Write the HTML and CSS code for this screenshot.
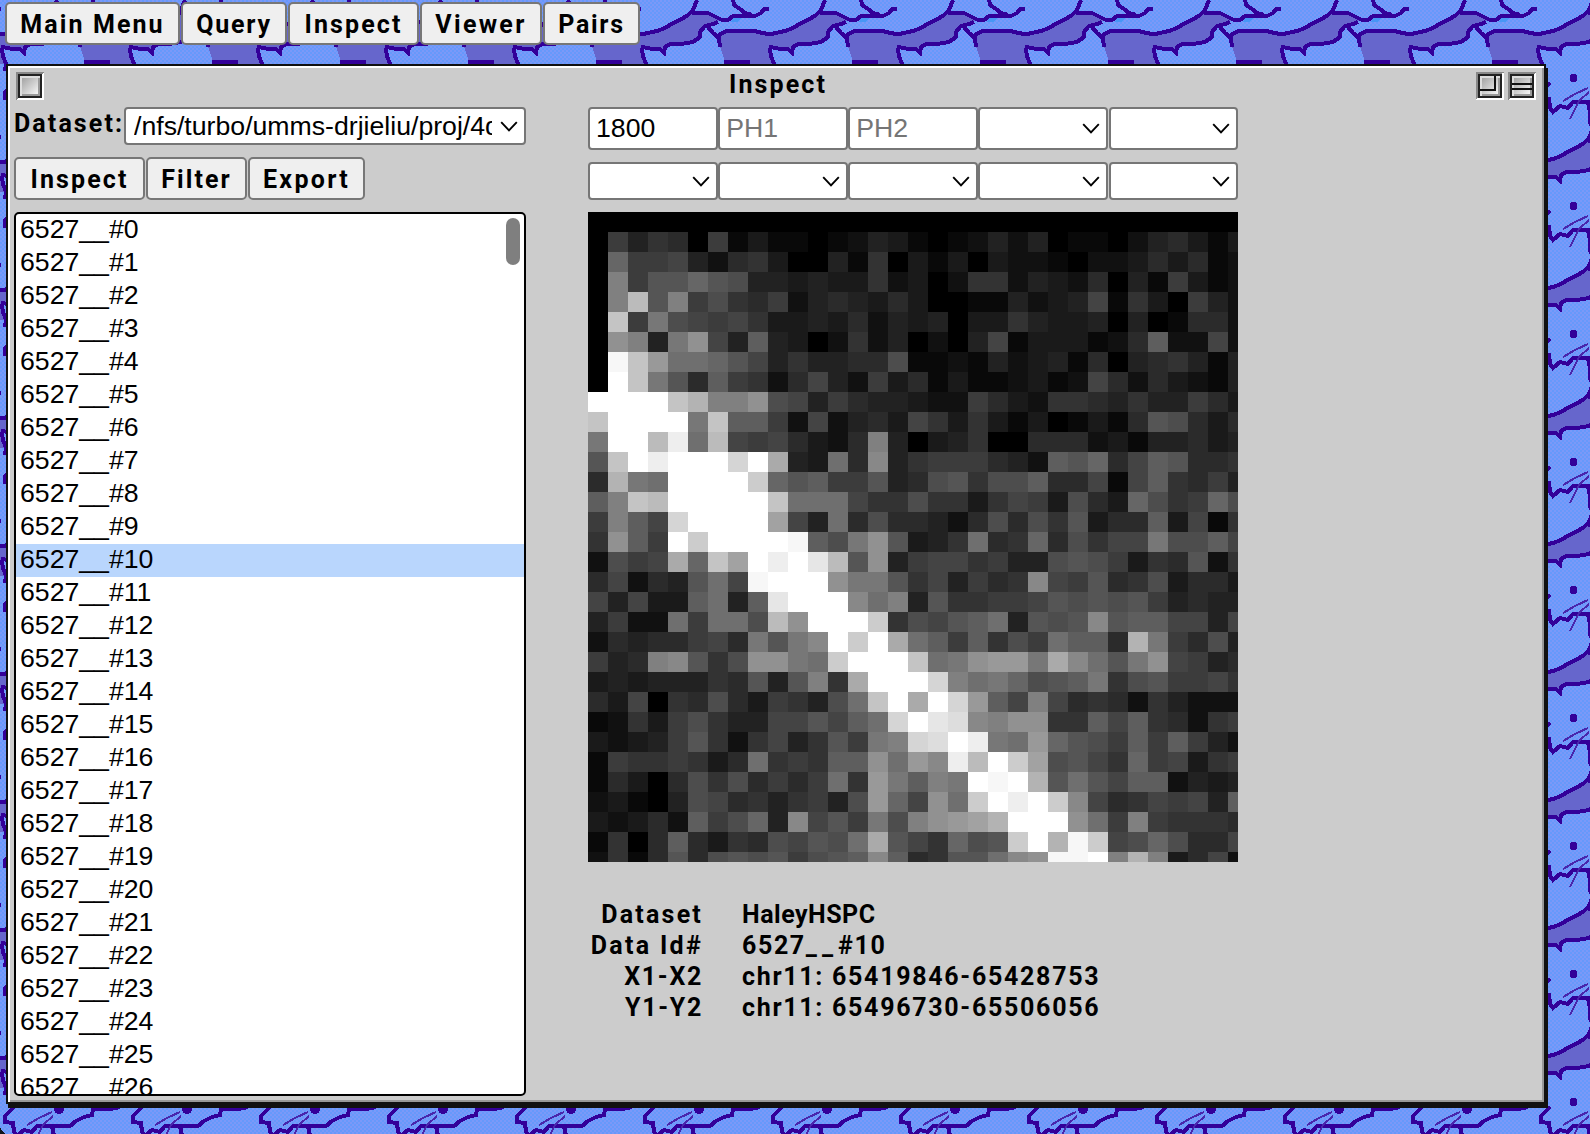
FILE: index.html
```html
<!DOCTYPE html>
<html lang="en">
<head>
<meta charset="utf-8">
<title>Inspect</title>
<link rel="stylesheet" href="styles.css">
</head>
<body>
<svg class="wallpaper" width="1590" height="1134" shape-rendering="crispEdges" aria-hidden="true">
  <defs>
    <pattern id="dither" width="4" height="4" patternUnits="userSpaceOnUse">
      <rect width="4" height="4" fill="#6699fb"/>
      <path d="M0 0h2v2H0zM2 2h2v2H2z" fill="#7b99f8"/>
    </pattern>
    <pattern id="tile" width="128" height="128" patternUnits="userSpaceOnUse">
      <rect width="128" height="128" fill="url(#dither)"/>
      <path d="M0 34L17 31L33 23L45 17L52 12L68 13L82 20L75 23L65 26L60 33L61 38L53 42L30 44L24 51L19 49L2 46L7 64L0 64Z" fill="#6666cc"/>
      <path d="M78 36L87 31L115 30L123 33L128 34V64H86L80 47Z" fill="#6666cc"/>
      <path d="M93 18h8l-4 4h-6z" fill="#4796f5"/>
      <g fill="none" stroke="#330099" stroke-width="4">
        <path d="M-5 34H3L17 31L25 28L33 23L40 20L48 15L53 10L57 0"/>
        <path d="M52 13H68L76 17L82 20H88L93 16H115L121 13L124 9H129"/>
        <path d="M-3 9H1"/>
        <path d="M93 -1L94 5L100 9L105 13L112 15"/>
        <path d="M78 22L73 24L65 26L60 32L60 37L53 42L41 44H30L25 47L24 53L20 49H12L3 47L2 50L3 56L6 64L5 71"/>
        <path d="M68 27L73 33L79 38L80 47M78 36L82 33L87 31H115L122 33L129 34"/>
        <path d="M84 62H110"/>
        <path d="M14 83L5 92V98L13 99L14 108L17 112L24 106L32 108L37 102H70L76 97L84 93L92 91L93 85H110L120 83"/>
        <path d="M52 102L54 112V122L57 129"/>
      </g>
      <path d="M27 101L39 94L52 88M53 92L43 101L34 119" fill="none" stroke="#4926ac" stroke-width="2"/>
      <circle cx="37.5" cy="78" r="4" fill="#330099"/>
      <circle cx="59" cy="85" r="5" fill="#330099"/>
    </pattern>
  </defs>
  <path d="M0 0H1590V1134H6Q0 1131 0 1124Z" fill="url(#tile)"/>
</svg>

<svg class="symbols" aria-hidden="true">
  <symbol id="chevron" viewBox="0 0 18 11"><path d="M1.2 1.2L9 9.4L16.8 1.2" fill="none" stroke="#000" stroke-width="1.9"/></symbol>
</svg>

<nav class="menu">
  <button class="btn menu-main">Main Menu</button>
  <button class="btn menu-query">Query</button>
  <button class="btn menu-inspect">Inspect</button>
  <button class="btn menu-viewer">Viewer</button>
  <button class="btn menu-pairs">Pairs</button>
</nav>

<main class="window">
  <header class="titlebar">
    <span class="box"><i class="face"></i></span>
    <h1 class="title">Inspect</h1>
    <span class="box"><i class="face"></i><svg class="glyph" width="20" height="20"><path d="M15 0V14H0" fill="none" stroke="#111" stroke-width="2"/></svg></span>
    <span class="box"><i class="face"></i><svg class="glyph" width="20" height="20"><path d="M0 8H20M0 13H20" stroke="#111" stroke-width="2"/></svg></span>
  </header>

  <div class="content">
    <section class="side">
      <div class="dataset">
        <label class="dataset-label">Dataset:</label>
        <div class="select dataset-select"><span class="select-text">/nfs/turbo/umms-drjieliu/proj/4dn</span><svg class="chev"><use href="#chevron"/></svg></div>
      </div>
      <div class="actions">
        <button class="btn act-inspect">Inspect</button>
        <button class="btn act-filter">Filter</button>
        <button class="btn act-export">Export</button>
      </div>
      <div class="listbox">
        <ul class="items">
          <li>6527__#0</li><li>6527__#1</li><li>6527__#2</li><li>6527__#3</li><li>6527__#4</li>
          <li>6527__#5</li><li>6527__#6</li><li>6527__#7</li><li>6527__#8</li><li>6527__#9</li>
          <li class="selected">6527__#10</li><li>6527__#11</li><li>6527__#12</li><li>6527__#13</li><li>6527__#14</li>
          <li>6527__#15</li><li>6527__#16</li><li>6527__#17</li><li>6527__#18</li><li>6527__#19</li>
          <li>6527__#20</li><li>6527__#21</li><li>6527__#22</li><li>6527__#23</li><li>6527__#24</li>
          <li>6527__#25</li><li>6527__#26</li>
        </ul>
        <span class="thumb"></span>
      </div>
    </section>

    <section class="view">
      <div class="row row-tall">
        <input class="field" type="text" value="1800">
        <input class="field" type="text" placeholder="PH1">
        <input class="field" type="text" placeholder="PH2">
        <div class="select"><svg class="chev"><use href="#chevron"/></svg></div>
        <div class="select"><svg class="chev"><use href="#chevron"/></svg></div>
      </div>
      <div class="row row-short">
        <div class="select"><svg class="chev"><use href="#chevron"/></svg></div>
        <div class="select"><svg class="chev"><use href="#chevron"/></svg></div>
        <div class="select"><svg class="chev"><use href="#chevron"/></svg></div>
        <div class="select"><svg class="chev"><use href="#chevron"/></svg></div>
        <div class="select"><svg class="chev"><use href="#chevron"/></svg></div>
      </div>
      <canvas class="heatmap" id="heatmap" width="650" height="650"></canvas>
      <dl class="info">
        <dt class="k1">Dataset</dt><dd class="v1">HaleyHSPC</dd>
        <dt class="k2">Data Id#</dt><dd class="v2">6527<span class="wide">__</span>#10</dd>
        <dt class="k3">X1-X2</dt><dd class="v3">chr11: 65419846-65428753</dd>
        <dt class="k3">Y1-Y2</dt><dd class="v3">chr11: 65496730-65506056</dd>
      </dl>
    </section>
  </div>
</main>
<script src="heatmap.js"></script>
</body>
</html>
```
FILE: styles.css
```css
* { box-sizing: border-box; }

html { background: #10141c; }

body {
  margin: 0;
  width: 1590px;
  height: 1134px;
  overflow: hidden;
  position: relative;
  color: #000;
  font: bold 25px/31px Roboto, "Liberation Sans", sans-serif;
}

.wallpaper { position: absolute; left: 0; top: 0; z-index: -1; }
.symbols { display: none; }

.btn {
  height: 43px;
  padding: 2px 0 0;
  border: 2px solid #777;
  border-radius: 5px;
  background: #efefef;
  color: #000;
  font: inherit;
  text-align: center;
  white-space: nowrap;
}

.menu { display: flex; gap: 1px; padding: 2px 0 0 5px; height: 64px; }
.menu-main { width: 175px; letter-spacing: 2.1px; }
.menu-query { width: 106px; letter-spacing: 1.8px; }
.menu-inspect { width: 131px; letter-spacing: 2.1px; }
.menu-viewer { width: 122px; letter-spacing: 2.3px; }
.menu-pairs { width: 97px; letter-spacing: 1.7px; }

.window {
  margin-left: 6px;
  width: 1540px;
  height: 1040px;
  padding: 6px;
  border: 2px solid #111;
  background: #ccc;
  box-shadow: 2px 4px 0 #111, inset 2px 2px 0 #fff, inset -2px -2px 0 #999;
}

.titlebar { display: flex; align-items: flex-start; gap: 4px; height: 35px; padding: 0 2px; }
.title { flex: 1; margin: -3px 0 0 0; padding-left: 36px; text-align: center; font: inherit; letter-spacing: 2.1px; }

.box {
  position: relative;
  width: 28px;
  height: 28px;
  padding: 2px;
  background: linear-gradient(135deg, #888 50%, #fff 50%);
}
.face {
  display: block;
  width: 24px;
  height: 24px;
  border: 2px solid #222;
  background: linear-gradient(135deg, #999, #fff) padding-box;
  box-shadow: inset 2px 2px 0 #ddd, inset -2px -2px 0 #999;
}
.glyph { position: absolute; left: 4px; top: 4px; }

.content { display: flex; gap: 62px; }
.side { width: 512px; }

.dataset { display: flex; height: 50px; }
.dataset-label { width: 110px; padding: 0; line-height: 34px; letter-spacing: 2.1px; }

.select {
  display: flex;
  align-items: center;
  justify-content: flex-end;
  width: 129.5px;
  padding: 0 6px;
  border: 2px solid #767676;
  border-radius: 4px;
  background: #fff;
  font: 26.67px/34px "Liberation Sans", Arial, sans-serif;
}
.chev { width: 18px; height: 11px; flex: none; }
.dataset-select { width: 402px; height: 38px; padding: 0 6px 0 8px; }
.select-text { flex: 1; margin-right: 8px; overflow: hidden; white-space: nowrap; }

.actions { display: flex; gap: 1px; height: 55px; }
.act-inspect { width: 131px; letter-spacing: 2.1px; }
.act-filter { width: 101px; letter-spacing: 2.1px; }
.act-export { width: 117px; letter-spacing: 2.3px; }

.listbox {
  position: relative;
  height: 884px;
  border: 2px solid #000;
  border-radius: 5px;
  background: #fff;
  overflow: hidden;
}
.items { margin: 0; padding: 0; list-style: none; font: 26.67px/31px "Liberation Sans", Arial, sans-serif; }
.items li { height: 33px; padding-left: 4px; }
.items .selected { background: #b9d6fd; }
.thumb { position: absolute; right: 4px; top: 4px; width: 14px; height: 47px; border-radius: 7px; background: #7f7f7f; }

.view { width: 650px; }
.row { display: flex; justify-content: space-between; }
.row-tall { height: 43px; margin-bottom: 12px; }
.row-short { height: 38px; margin-bottom: 12px; }
.field {
  width: 129.5px;
  height: 43px;
  padding: 0 6px;
  border: 2px solid #767676;
  border-radius: 4px;
  background: #fff;
  color: #000;
  font: 26.67px/36px "Liberation Sans", Arial, sans-serif;
}
.field::placeholder { color: #757575; }

.heatmap { display: block; width: 650px; height: 650px; background: #000; }

.info {
  display: grid;
  grid-template-columns: 115px 1fr;
  column-gap: 39px;
  margin: 37px 0 0;
}
.info dt { text-align: right; white-space: nowrap; }
.info dd { margin: 0; white-space: nowrap; }
.k1 { letter-spacing: 2.2px; }
.k2 { letter-spacing: 2.3px; }
.k3 { letter-spacing: 1.7px; }
.v1 { letter-spacing: 0.5px; }
.v2 { letter-spacing: 1.6px; }
.v3 { letter-spacing: 1.7px; }
.wide { letter-spacing: 5px; }
```
FILE: heatmap.js
```js
// Each character is one cell: 0 is black, U is white, 30 grey steps.
const rows = [
  "000000000000000000000000000000000",
  "074650713110124310124240110245313",
  "0C7784256300416031303221022353512",
  "0F7AACA94434336230266243250417312",
  "0FMAF7965724543530011423481630742",
  "0N7E98786334352434033643340401552",
  "0HF4EH84B4302624020481333125B2282",
  "0TNIDDCA8464455911214234150456414",
  "0UNEA5B76258427351311231285253214",
  "UUUUNLFFH984754432275326654644753",
  "NUUUUENBB7282453863631301315A9535",
  "EUUMSDM8785325F403460055523144534",
  "ANUSUUUPUK43D5G46777542BAC58BA556",
  "5LEDUUUUOCAB77A459A699B55818B6574",
  "BFNMUUUUUNDDD86696636873953C967C9",
  "7FB8PUUUUJ84D59554259596A355B3816",
  "6HB7UOUUUUTB9EHA346D56C59688E99B8",
  "2978KCNJUSURMAH478867449A97365A26",
  "58254AD8TUUUHEEA684756G87A5693553",
  "84833BD4BRUUUGDF4A66778A9A9A74544",
  "4722D7DD9MHUUUO698ABD4A9AGABB8848",
  "25455785EAEGUOUKDB7B697DBB5LE7594",
  "745FGA69HHEDOUUUNDEHIIEKGDAEH8745",
  "34344465A4AF6KUUUPFDEC9ABE69A7786",
  "5380659537649DNUKUPIB8F8565264222",
  "12637964488A8BDPURQGFHH66B8B65267",
  "32347A626846A7EFPQUSEDICA97B7B742",
  "17667635D676BBHDIGSMUOJ9A86C78367",
  "153059695757D6IEBFEUTULADA8BB2434",
  "23104985646749IC8HDOUSUOG8568784B",
  "32352B79C4G8A7E9FHIJLUUUHD7F76665",
  "1605B536598A9DKA86C9AOULTO89C9558",
  "2615A59A9A79ABGB56AADGHTTUFLF3582"
];

const ctx = document.getElementById("heatmap").getContext("2d");
rows.forEach((row, y) => {
  [...row].forEach((ch, x) => {
    const v = Math.round(parseInt(ch, 31) * 8.5);
    ctx.fillStyle = `rgb(${v},${v},${v})`;
    ctx.fillRect(x * 20, y * 20, 20, 20);
  });
});
```
